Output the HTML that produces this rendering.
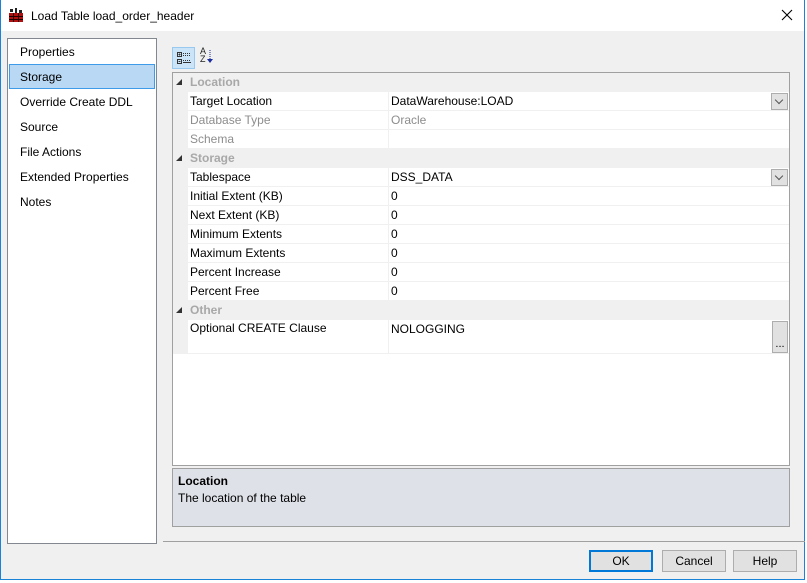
<!DOCTYPE html>
<html><head><style>
*{box-sizing:border-box;margin:0;padding:0}
body{width:807px;height:583px;background:#fff;font-family:"Liberation Sans",sans-serif;font-size:12px;color:#000;position:relative;overflow:hidden}
.abs{position:absolute}
.win{left:0;top:0;width:805px;height:580px;border:1px solid #1883d7;border-top:none;background:#f0f0f0}
.title{left:1px;top:0;width:803px;height:31px;background:#fff}
.list{left:7px;top:38px;width:150px;height:506px;background:#fff;border:1px solid #828790}
.sel{left:9px;top:64px;width:146px;height:25px;background:#b9d8f3;border:1px solid #3d9be9}
.grid{left:172px;top:72px;width:618px;height:394px;background:#fff;border:1px solid #a0a0a0}
.row{position:absolute;left:0;width:616px;height:19px}
.cat{background:#f0f0f0;color:#a8a8a8;font-weight:bold}
.cat span{position:absolute;left:17px;top:2px}
.cat i{position:absolute;left:3px;top:6px;width:0;height:0;border-left:6px solid transparent;border-bottom:6px solid #333;font-style:normal}
.prop{background:#f0f0f0}
.prop .n{position:absolute;left:15px;top:0;width:200px;height:18px;background:#fff;padding:2px 2px}
.prop .v{position:absolute;left:216px;top:0;width:400px;height:18px;background:#fff;padding:2px 2px}
.g{color:#8d8d8d}
.dd{position:absolute;right:1px;top:1px;width:17px;height:17px;background:#e1e1e1;border:1px solid #adadad}
.dd:after{content:"";position:absolute;left:4px;top:3px;width:5px;height:5px;border-right:1px solid #555;border-bottom:1px solid #555;transform:rotate(45deg)}
.eb{position:absolute;right:1px;top:1px;width:16px;height:32px;background:#e1e1e1;border:1px solid #adadad;font-size:11px;text-align:center;line-height:44px;overflow:hidden}
.desc{left:172px;top:468px;width:618px;height:59px;background:#dee1e8;border:1px solid #a0a0a0}
.btn{top:550px;height:22px;background:#e1e1e1;border:1px solid #adadad;text-align:center;line-height:20px}
</style></head><body>
<div class="abs win"></div>
<div class="abs title"></div>
<svg class="abs" style="left:9px;top:8px" width="14" height="14"><rect x="0" y="5" width="14" height="9" fill="#b01010"/><g stroke="#200" stroke-width="1"><line x1="0" y1="8.5" x2="14" y2="8.5"/><line x1="0" y1="11.5" x2="14" y2="11.5"/><line x1="4.5" y1="5" x2="4.5" y2="14"/><line x1="9.5" y1="5" x2="9.5" y2="14"/></g><rect x="1" y="1" width="3" height="3" fill="#222"/><rect x="6" y="0" width="2" height="5" fill="#222"/><rect x="10" y="2" width="3" height="3" fill="#222"/></svg>
<div class="abs" style="left:31px;top:9px;font-size:12px">Load Table load_order_header</div>
<svg class="abs" style="left:781px;top:9px" width="12" height="12"><path d="M1 1L11 11M11 1L1 11" stroke="#000" stroke-width="1.1"/></svg>

<div class="abs list"></div>
<div class="abs sel"></div>
<div class="abs" style="left:20px;top:45px">Properties</div>
<div class="abs" style="left:20px;top:70px">Storage</div>
<div class="abs" style="left:20px;top:95px">Override Create DDL</div>
<div class="abs" style="left:20px;top:120px">Source</div>
<div class="abs" style="left:20px;top:145px">File Actions</div>
<div class="abs" style="left:20px;top:170px">Extended Properties</div>
<div class="abs" style="left:20px;top:195px">Notes</div>

<div class="abs" style="left:172px;top:47px;width:23px;height:22px;background:#cce4f7;border:1px solid #99c9ef"></div>
<svg class="abs" style="left:176px;top:51px" width="16" height="14"><g fill="none" stroke="#333"><rect x="1.5" y="1.5" width="4" height="4"/><rect x="1.5" y="8.5" width="4" height="4"/></g><g stroke="#333"><line x1="2.5" y1="3.5" x2="4.5" y2="3.5"/><line x1="3.5" y1="2.5" x2="3.5" y2="4.5"/><line x1="2.5" y1="10.5" x2="4.5" y2="10.5"/><line x1="7" y1="2.5" x2="15" y2="2.5" stroke-dasharray="1 1"/><line x1="7" y1="4.5" x2="15" y2="4.5" stroke-dasharray="1 1"/><line x1="7" y1="9.5" x2="15" y2="9.5" stroke-dasharray="1 1"/><line x1="7" y1="11.5" x2="15" y2="11.5"/></g></svg>
<div class="abs" style="left:200px;top:47px;font-size:9px;line-height:8px;color:#222">A<br>Z</div>
<svg class="abs" style="left:206px;top:49px" width="8" height="16"><line x1="4" y1="1" x2="4" y2="13" stroke="#1a2e9e" stroke-dasharray="1 1"/><path d="M1 10L4 14L7 10Z" fill="#1a2e9e"/></svg>

<div class="abs grid">
<div class="row cat" style="top:0"><i></i><span>Location</span></div>
<div class="row prop" style="top:19px"><div class="n">Target Location</div><div class="v">DataWarehouse:LOAD<div class="dd"></div></div></div>
<div class="row prop" style="top:38px"><div class="n g">Database Type</div><div class="v g">Oracle</div></div>
<div class="row prop" style="top:57px"><div class="n g">Schema</div><div class="v"></div></div>
<div class="row cat" style="top:76px"><i></i><span>Storage</span></div>
<div class="row prop" style="top:95px"><div class="n">Tablespace</div><div class="v">DSS_DATA<div class="dd"></div></div></div>
<div class="row prop" style="top:114px"><div class="n">Initial Extent (KB)</div><div class="v">0</div></div>
<div class="row prop" style="top:133px"><div class="n">Next Extent (KB)</div><div class="v">0</div></div>
<div class="row prop" style="top:152px"><div class="n">Minimum Extents</div><div class="v">0</div></div>
<div class="row prop" style="top:171px"><div class="n">Maximum Extents</div><div class="v">0</div></div>
<div class="row prop" style="top:190px"><div class="n">Percent Increase</div><div class="v">0</div></div>
<div class="row prop" style="top:209px"><div class="n">Percent Free</div><div class="v">0</div></div>
<div class="row cat" style="top:228px"><i></i><span>Other</span></div>
<div class="row prop" style="top:247px;height:34px"><div class="n" style="height:33px;padding-top:1px">Optional CREATE Clause</div><div class="v" style="height:33px">NOLOGGING<div class="eb">...</div></div></div>
</div>

<div class="abs desc"><div class="abs" style="left:5px;top:5px;font-weight:bold">Location</div><div class="abs" style="left:5px;top:22px">The location of the table</div></div>
<div class="abs" style="left:163px;top:541px;width:642px;height:1px;background:#a0a0a0"></div>
<div class="abs btn" style="left:589px;width:64px;border:2px solid #0078d7;line-height:18px">OK</div>
<div class="abs btn" style="left:662px;width:64px">Cancel</div>
<div class="abs btn" style="left:733px;width:64px">Help</div>
</body></html>
